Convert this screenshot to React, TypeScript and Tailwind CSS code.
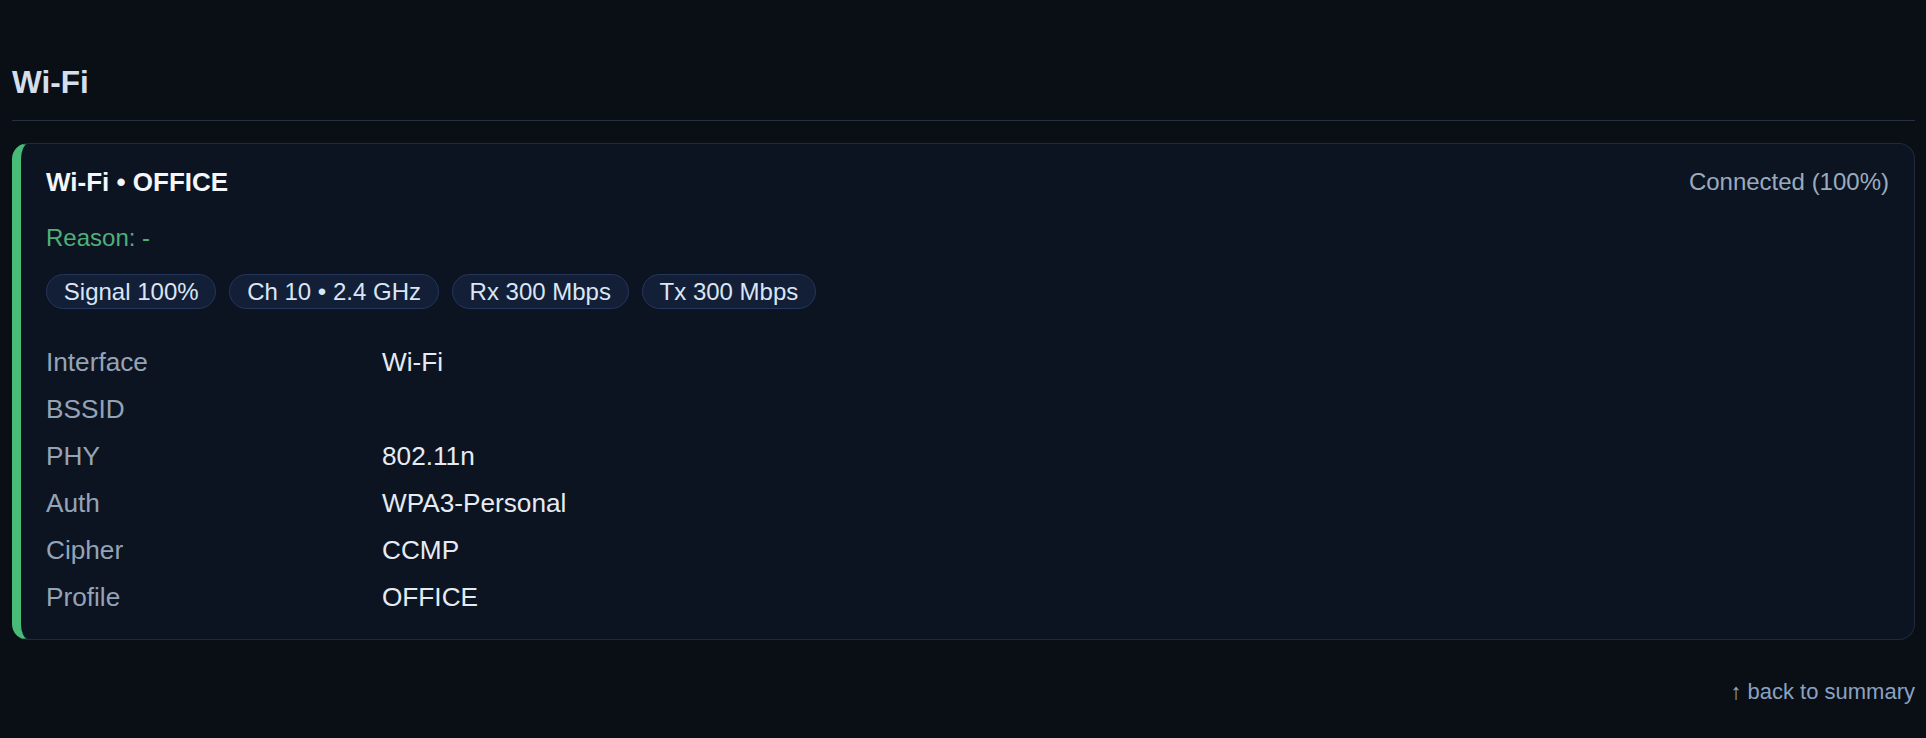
import React from 'react';

const chips = ['Signal 100%', 'Ch 10 • 2.4 GHz', 'Rx 300 Mbps', 'Tx 300 Mbps'];

const rows: { label: string; value: string }[] = [
  { label: 'Interface', value: 'Wi-Fi' },
  { label: 'BSSID', value: '' },
  { label: 'PHY', value: '802.11n' },
  { label: 'Auth', value: 'WPA3-Personal' },
  { label: 'Cipher', value: 'CCMP' },
  { label: 'Profile', value: 'OFFICE' },
];

function Chip({ text }: { text: string }) {
  return (
    <span className="rounded-full border border-[#26365a] bg-[#131f37] px-[16.8px] text-[24px] leading-[33px] text-[#d9e6f6]">
      {text}
    </span>
  );
}

export default function App() {
  return (
    <div
      className="min-h-[738px] bg-[#0a0f16] pl-[12px] pr-[11px] pt-[63px] pb-[30px]"
      style={{ fontFamily: '"Liberation Sans", Arial, sans-serif' }}
    >
      <h2 className="border-b border-[#263041] pb-[19px] text-[31.5px] font-bold leading-[38px] text-[#d3dfec]">
        Wi-Fi
      </h2>

      {/* Wi-Fi card */}
      <div className="mt-[22px] rounded-[16px] border border-[#1f2a3b] border-l-[9px] border-l-[#48bb78] bg-[#0c1422] pt-[20px] pr-[25px] pb-[18px] pl-[25px]">
        <div className="flex items-center justify-between">
          <div className="text-[26px] font-bold leading-[36px] text-[#f3f6fa]">Wi-Fi • OFFICE</div>
          <div className="text-[24px] leading-[36px] text-[#9aabbf]">Connected (100%)</div>
        </div>

        <div className="mt-[21px] text-[24px] leading-[33px] text-[#4fb07b]">Reason: -</div>

        <div className="mt-[20px] flex flex-wrap gap-[13px]">
          {chips.map((c) => (
            <Chip key={c} text={c} />
          ))}
        </div>

        <dl className="mt-[30px] grid grid-cols-[336px_1fr] text-[26.2px] leading-[47px]">
          {rows.map((r) => (
            <React.Fragment key={r.label}>
              <dt className="text-[#95a3b6]">{r.label}</dt>
              <dd className="text-[#e6ebf2]">{r.value}</dd>
            </React.Fragment>
          ))}
        </dl>
      </div>

      <div className="mt-[37px] text-right text-[22px] leading-[30px]">
        <a href="#summary" className="text-[#8aa2c0]">
          <span className="text-[#9aa8b8]">↑</span> back to summary
        </a>
      </div>
    </div>
  );
}
